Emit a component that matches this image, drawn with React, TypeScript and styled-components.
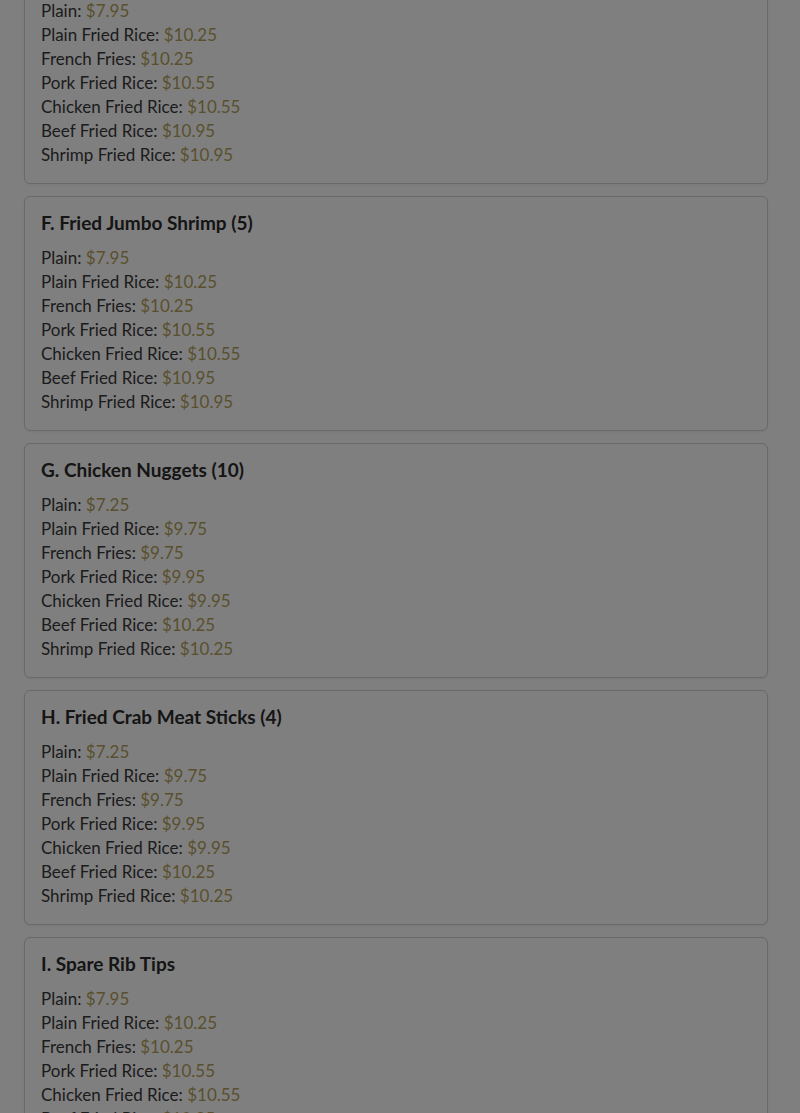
import styled, { createGlobalStyle } from 'styled-components';

const GlobalStyle = createGlobalStyle`
  html, body {
    margin: 0;
    padding: 0;
    background: #ffffff;
    font-family: Lato, "Noto Sans", "Liberation Sans", sans-serif;
    color: #3a3a3a;
    overflow: hidden;
  }
`;

const Page = styled.main`
  /* simulates the page being scrolled partway down */
  margin: -51px 32px 0 24px;
  display: flex;
  flex-direction: column;
  gap: 12px;
`;

const Card = styled.section`
  border: 1px solid #d2d2d2;
  border-radius: 6px;
  padding: 14px 16px 16px;
  background: #ffffff;
  box-shadow: 0 1px 3px rgba(0, 0, 0, 0.06);
`;

const Title = styled.h3`
  margin: 0 0 12px;
  font-size: 19px;
  line-height: 23px;
  font-weight: 700;
  color: #2a2a2a;
`;

const Row = styled.div`
  font-size: 17px;
  line-height: 24px;
  color: #383838;
`;

const Price = styled.span`
  color: #b4a05a;
`;

const Backdrop = styled.div`
  position: fixed;
  inset: 0;
  background: rgba(0, 0, 0, 0.5);
  z-index: 10;
`;

type Item = { title: string; prices: string[] };

const options = [
  'Plain',
  'Plain Fried Rice',
  'French Fries',
  'Pork Fried Rice',
  'Chicken Fried Rice',
  'Beef Fried Rice',
  'Shrimp Fried Rice',
];

const high = ['$7.95', '$10.25', '$10.25', '$10.55', '$10.55', '$10.95', '$10.95'];
const low = ['$7.25', '$9.75', '$9.75', '$9.95', '$9.95', '$10.25', '$10.25'];

const items: Item[] = [
  { title: 'E. Chicken Wings (4)', prices: high },
  { title: 'F. Fried Jumbo Shrimp (5)', prices: high },
  { title: 'G. Chicken Nuggets (10)', prices: low },
  { title: 'H. Fried Crab Meat Sticks (4)', prices: low },
  { title: 'I. Spare Rib Tips', prices: high },
];

export default function App() {
  return (
    <>
      <GlobalStyle />
      <Page>
        {items.map((item) => (
          <Card key={item.title}>
            <Title>{item.title}</Title>
            {options.map((opt, i) => (
              <Row key={opt}>
                {opt}: <Price>{item.prices[i]}</Price>
              </Row>
            ))}
          </Card>
        ))}
      </Page>
      <Backdrop />
    </>
  );
}
